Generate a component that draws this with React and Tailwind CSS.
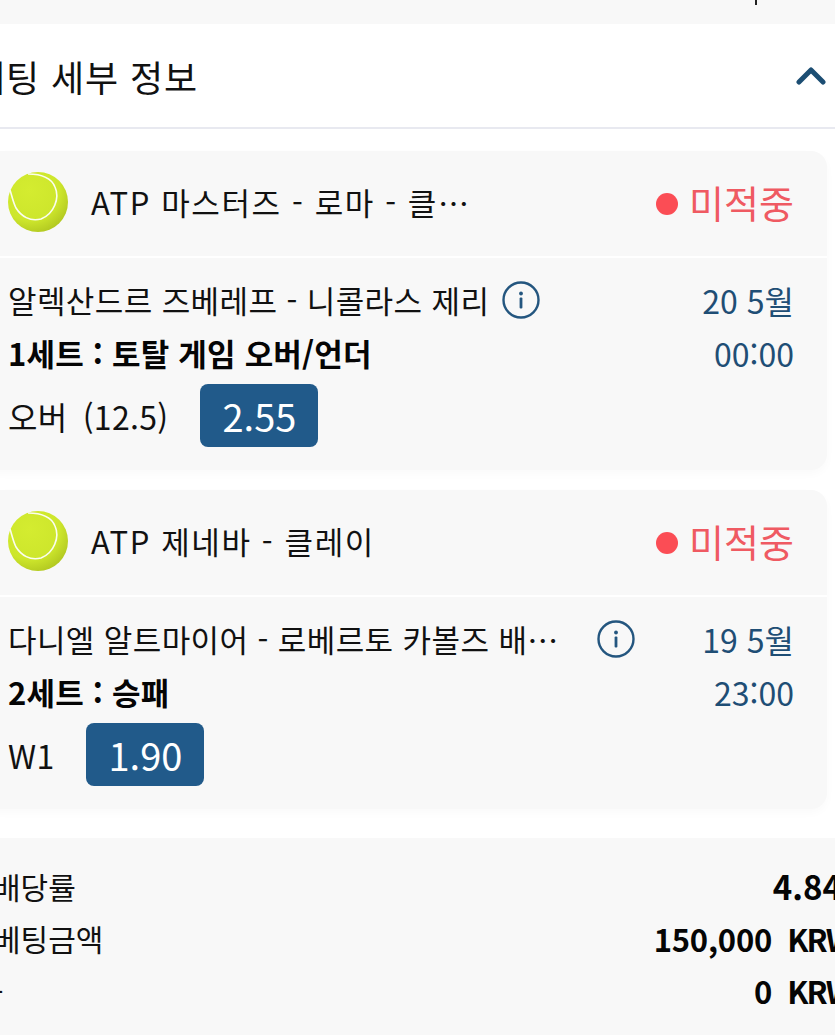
import React from "react";

const FONT = { fontFamily: '"Noto Sans CJK KR", "Noto Sans", sans-serif' };

const TennisBall = ({ id }) => (
  <svg width="60" height="60" viewBox="0 0 60 60" className="shrink-0 -mt-1">
    <defs>
      <radialGradient id={id} cx="36%" cy="30%" r="78%">
        <stop offset="0%" stopColor="#d4ec30" />
        <stop offset="65%" stopColor="#cde62c" />
        <stop offset="100%" stopColor="#aec41f" />
      </radialGradient>
    </defs>
    <circle cx="30" cy="30" r="30" fill={`url(#${id})`} />
    <path
      d="M20 2C32 2 43 5 47 15C52 26 46 42 33 47C22 50 13 44 8 36C5 30 4 24 2 18"
      fill="none"
      stroke="#fbfdf0"
      strokeWidth="1.6"
    />
  </svg>
);

const InfoIcon = () => (
  <svg width="38" height="38" viewBox="0 0 38 38" className="shrink-0">
    <circle cx="19" cy="19" r="17.5" fill="none" stroke="#24567f" strokeWidth="2.4" />
    <circle cx="19" cy="12.5" r="1.9" fill="#24567f" />
    <rect x="17.6" y="16.5" width="2.8" height="11" rx="1" fill="#24567f" />
  </svg>
);

const BetCard = ({ id, league, match, market, pick, odds, date, time }) => (
  <section className="ml-[-16px] mr-2 rounded-2xl bg-[#f8f8f8] shadow-[0_4px_10px_rgba(0,0,0,0.025)]">
    <div className="h-[107px] flex items-center justify-between pl-6 pr-[33px] border-b-2 border-white">
      <div className="flex items-center gap-[23px]">
        <TennisBall id={id} />
        <span className="-mt-1 text-[31px] leading-none tracking-[1.6px] text-[#111]">{league}</span>
      </div>
      <div className="flex items-center gap-[11px]">
        <span className="w-[22px] h-[22px] rounded-full bg-[#fb4d55]" />
        <span className="-mt-1 text-[38px] leading-none text-[#ef5a62]">미적중</span>
      </div>
    </div>
    <div className="flex justify-between pl-6 pr-[33px] pt-[17px] pb-[23px]">
      <div className="min-w-0">
        <div className="flex items-center gap-[13px] h-[50px]">
          <span className="max-w-[576px] truncate text-[31px] leading-[50px] tracking-[0.4px] text-[#111]">{match}</span>
          <InfoIcon />
        </div>
        <div className="h-[56px] text-[31px] font-bold leading-[56px] tracking-[0.2px] text-[#050505]">{market}</div>
        <div className="flex items-center gap-[32px] h-[63px] mt-[3px]">
          <span className="text-[32px] leading-none tracking-[0.3px] [word-spacing:6px] text-[#111]">{pick}</span>
          <span className="w-[118px] h-[63px] flex items-center justify-center rounded-lg bg-[#215a8a] text-[38px] text-white">
            {odds}
          </span>
        </div>
      </div>
      <div className="shrink-0 text-right text-[32px] text-[#1f4e75]">
        <div className="h-[50px] leading-[50px]">{date}</div>
        <div className="h-[56px] leading-[56px]">{time}</div>
      </div>
    </div>
  </section>
);

const SummaryRow = ({ label, value, unit }) => (
  <div className="flex justify-between h-[52px] items-center text-[30px] leading-none text-[#111]">
    <span>{label}</span>
    <span
      className={
        unit
          ? "text-[31px] tracking-[-0.2px] font-bold text-[#050505] mr-[-10px]"
          : "text-[33px] font-bold text-[#050505]"
      }
    >
      {value}
      {unit && <span className="ml-[15px] tracking-[-2px]">{unit}</span>}
    </span>
  </div>
);

export default function App() {
  return (
    <div lang="ko" style={FONT} className="w-[835px] h-[1035px] overflow-hidden bg-white">
      <div className="h-6 bg-[#f8f8f8] flex justify-end pr-[78px]">
        <span className="w-[2px] h-[5px] bg-[#222]" />
      </div>

      <header className="h-[105px] flex items-center justify-between ml-[-28px] pr-[9px] border-b-2 border-[#e8e9f0]">
        <h1 className="text-[36px] font-normal leading-none tracking-[0.9px] text-[#111]">베팅 세부 정보</h1>
        <svg width="30" height="18" viewBox="0 0 30 18" fill="none">
          <path d="M3 15L15 3L27 15" stroke="#1c4e73" strokeWidth="5" strokeLinecap="round" strokeLinejoin="round" />
        </svg>
      </header>

      <main className="pt-[22px] flex flex-col gap-5">
        <BetCard
          id="ball-1"
          league="ATP 마스터즈 - 로마 - 클⋯"
          match="알렉산드르 즈베레프 - 니콜라스 제리"
          market="1세트 : 토탈 게임 오버/언더"
          pick="오버 (12.5)"
          odds="2.55"
          date="20 5월"
          time="00:00"
        />
        <BetCard
          id="ball-2"
          league="ATP 제네바 - 클레이"
          match="다니엘 알트마이어 - 로베르토 카볼즈 배르다스코"
          market="2세트 : 승패"
          pick="W1"
          odds="1.90"
          date="19 5월"
          time="23:00"
        />
      </main>

      <footer className="mt-[29px] bg-[#f8f8f8] ml-[-7px] mr-[-7px] pt-[22px] h-[210px]">
        <SummaryRow label="배당률" value="4.84" />
        <SummaryRow label="베팅금액" value="150,000" unit="KRW" />
        <SummaryRow label="-" value="0" unit="KRW" />
      </footer>
    </div>
  );
}
